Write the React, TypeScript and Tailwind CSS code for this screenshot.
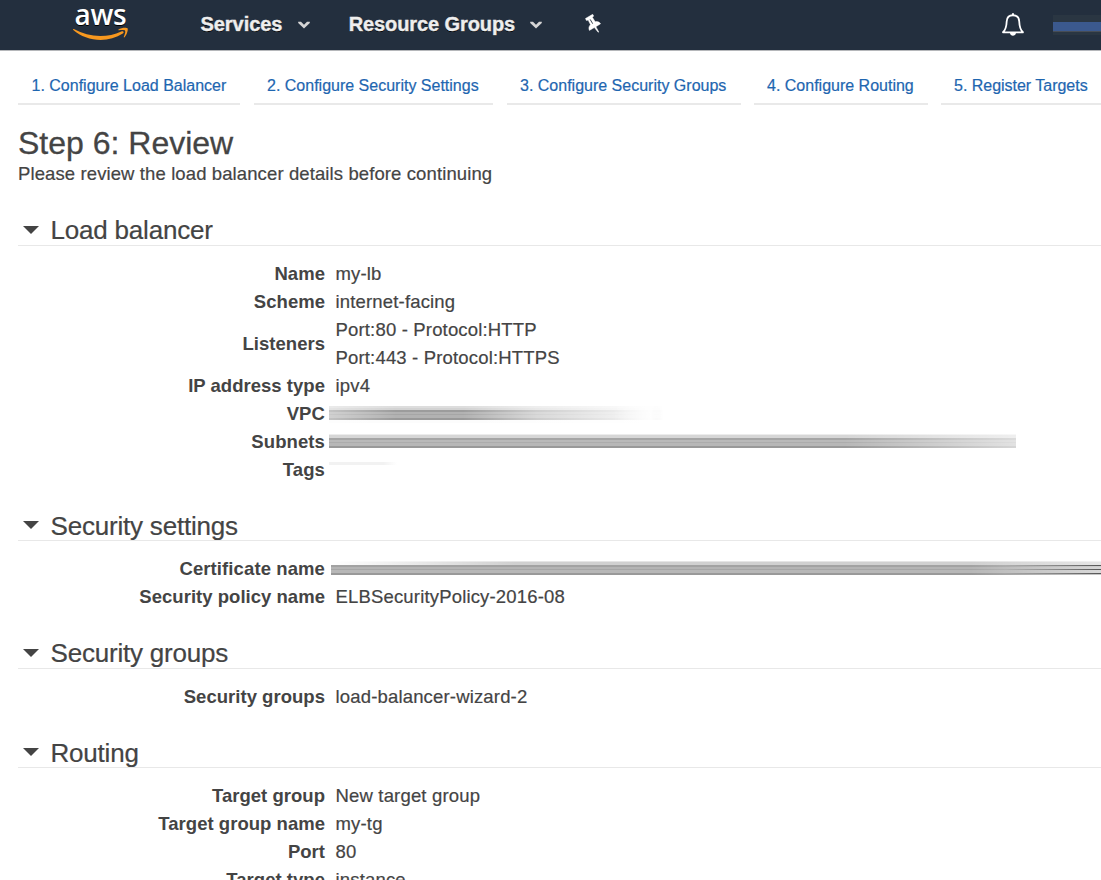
import type { ReactNode } from "react";

const tabs = [
  { label: "1. Configure Load Balancer", width: "w-[222px] mr-[14px]" },
  { label: "2. Configure Security Settings", width: "w-[239px] mr-[14px]" },
  { label: "3. Configure Security Groups", width: "w-[234px] mr-[13px]" },
  { label: "4. Configure Routing", width: "w-[174px] mr-[13px]" },
  { label: "5. Register Targets", width: "w-[170px] -tracking-[0.02px]" },
];

function Chevron() {
  return (
    <svg width="12" height="8" viewBox="0 0 12 8" className="shrink-0">
      <path d="M0.2 .8 H3 L6 3.8 L9 .8 H11.8 V2 L6 7.6 L.2 2 Z" fill="#d5d5d5" />
    </svg>
  );
}

function Logo() {
  return (
    <div className="ml-[73px] flex h-[50px] w-14 shrink-0 flex-col items-center">
      <span className="h-[26px] pr-px font-['Open_Sans',sans-serif] text-[28px] leading-[28px] font-semibold tracking-[-0.2px] text-white">
        aws
      </span>
      <svg width="56" height="14" viewBox="0 0 56 14">
        <path d="M.8 3 C16 11.5 34 12 48.3 5.4 C50.4 4.5 51.5 6.4 49.8 7.6 C35 17.3 13 15.5 .3 4 C-.2 3.3 .1 2.7 .8 3 Z" fill="#f7981f" />
        <path d="M45.5 3.5 C48 1.7 53.6 1.3 54.5 2.3 C55.4 3.6 54 9 51.5 11.2 C51 11.6 50.6 11.3 50.8 10.8 C51.5 9.1 52.8 5.7 52.1 4.7 C51.3 3.7 47.8 4.1 46 4.3 C45.4 4.3 45.1 3.9 45.5 3.5 Z" fill="#f7981f" />
      </svg>
    </div>
  );
}

function Header() {
  return (
    <header className="flex h-[51px] items-center overflow-hidden border-b border-[#b5b7ba] bg-[#232f3e] text-[20px] font-bold text-[#eee] [text-shadow:0_1px_0_#000]">
      <Logo />
      <span className="ml-[71.5px] w-[97.5px] pb-[3px] tracking-[-0.05px] [-webkit-text-stroke:0.4px_#eee]">Services</span>
      <Chevron />
      <span className="ml-[39px] w-[182px] pb-[3px] tracking-[-0.1px] whitespace-nowrap [-webkit-text-stroke:0.4px_#eee]">Resource Groups</span>
      <Chevron />
      <svg width="17" height="19" viewBox="0 0 17 19" className="mb-[3px] ml-[43px]">
        <path d="M.5 4.5 L7.7 .3 L8.7 2 L7.4 3.3 L10.2 7.8 C12.5 7 14.4 8 15.6 9.8 L10.9 12.7 L13.8 18 L13.2 18.3 L9.4 13.6 L4.4 16.4 C3.5 14.2 3.8 12.4 5.5 10.7 L3.2 6.1 L1.4 6.5 Z" fill="white" stroke="white" strokeWidth=".5" />
        <path d="M5.2 5.4 L7.7 9.7" stroke="#232f3e" strokeWidth=".9" />
      </svg>
      <svg width="24" height="24" viewBox="0 0 24 24" className="mb-[3px] ml-[399px]">
        <path d="M2 20.3 C5 17.5 5.5 15 5.7 9.5 C5.9 5.7 8.2 3.2 12 3.2 C15.8 3.2 18.1 5.7 18.3 9.5 C18.5 15 19 17.5 22 20.3 Z" fill="none" stroke="white" strokeWidth="1.8" strokeLinejoin="round" />
        <path d="M11 3 V1.2 H13 V3 Z M9 21 H15 C14.7 24.6 9.3 24.6 9 21 Z" fill="white" />
      </svg>
      <div className="mb-px ml-[28px] h-5 w-12 shrink-0 bg-[linear-gradient(#2a3642_0_7px,#3b598e_7px_16px,#474d55_16px_17px,#2a3642_17px)]" />
    </header>
  );
}

function Section({ title, className, children }: { title: string; className: string; children: ReactNode }) {
  return (
    <section>
      <h2 className={`ml-[18px] flex items-end border-b border-[#e8e8e8] pl-[5px] text-[26px] ${className}`}>
        <svg width="16" height="8" viewBox="0 0 16 8" className="mr-3 mb-[11px]">
          <path d="M0 0 H16 L8 8 Z" fill="#444" />
        </svg>
        <span className="-ml-[0.5px] tracking-[-0.2px] [-webkit-text-stroke:0.2px_#444]">{title}</span>
      </h2>
      <dl className="-mb-px pt-[14px]">{children}</dl>
    </section>
  );
}

function Row({ label, children }: { label: string; children?: ReactNode }) {
  return (
    <div className="flex items-center text-[18.5px] leading-7">
      <dt className="w-[325px] shrink-0 text-right font-bold tracking-[0.03px]">{label}</dt>
      <dd className="pl-[10.5px] tracking-[0.17px] [-webkit-text-stroke:0.2px_#444]">{children}</dd>
    </div>
  );
}

function SmearRow({ label, children }: { label: string; children: ReactNode }) {
  return (
    <div className="flex h-7 text-[18.5px] leading-7">
      <dt className="w-[325px] shrink-0 text-right font-bold tracking-[0.1px]">{label}</dt>
      <dd>{children}</dd>
    </div>
  );
}

export default function App() {
  return (
    <div className="h-[880px] w-[1101px] overflow-hidden bg-white font-['Liberation_Sans',Arial,sans-serif] text-[#444]">
      <Header />
      <nav className="ml-[18px] flex h-[54px] overflow-hidden">
        {tabs.map((t) => (
          <a key={t.label} className={`shrink-0 border-b-2 border-[#e9e9e9] pl-[13px] text-[16px] leading-[69px] whitespace-nowrap text-[#1e66b0] [-webkit-text-stroke:0.2px_#1e66b0] first:pl-[13.5px] ${t.width}`}>
            {t.label}
          </a>
        ))}
      </nav>
      <div className="ml-[18px] pt-5">
        <h1 className="text-[32px] leading-[36px] [-webkit-text-stroke:0.3px_#444]">Step 6: Review</h1>
        <p className="text-[18.5px] leading-[25px] tracking-[0.11px] [-webkit-text-stroke:0.2px_#444]">Please review the load balancer details before continuing</p>
      </div>
      <Section title="Load balancer" className="h-[60px] leading-[30px]">
        <Row label="Name">my-lb</Row>
        <Row label="Scheme">internet-facing</Row>
        <Row label="Listeners">
          <div>Port:80 - Protocol:HTTP</div>
          <div>Port:443 - Protocol:HTTPS</div>
        </Row>
        <Row label="IP address type">ipv4</Row>
        <SmearRow label="VPC">
          <div className="mt-[6px] ml-1 h-[17px] w-[335px] bg-[linear-gradient(90deg,#ffffff66,transparent_20%,transparent_40%,#ffffff80_62%,#ffffffee_96%,#ffffff88_99%,#fff),linear-gradient(#ddd_0_2px,#d3d3d3_2px_4px,#9c9c9c_4px_6px,#b2b2b2_6px_8px,#a6a6a6_8px_9px,#b2b2b2_9px_12px,#999_12px_14px,#fcfcfc_14px)] [mask-image:linear-gradient(90deg,black_85%,transparent)]" />
        </SmearRow>
        <SmearRow label="Subnets">
          <div className="mt-[6px] ml-1 h-[14px] w-[687px] bg-[linear-gradient(90deg,transparent_75%,#ffffff99),linear-gradient(#ececec_0_1px,#d6d6d6_1px_4px,#a5a5a5_4px_6px,#b9b9b9_6px_8px,#acacac_8px_9px,#b7b7b7_9px_12px,#999_12px_14px)]" />
        </SmearRow>
        <SmearRow label="Tags">
          <div className="mt-[6px] ml-1 h-[3px] w-[68px] bg-[linear-gradient(90deg,#f2f2f2_80%,#fff)]" />
        </SmearRow>
      </Section>
      <Section title="Security settings" className="h-[58px] leading-[28px]">
        <SmearRow label="Certificate name">
          <div className="mt-[6px] ml-[6px] h-[14px] w-[770px] bg-[linear-gradient(90deg,transparent_83%,#ffffff77),linear-gradient(90deg,#fff_0%,transparent_24%),linear-gradient(#e5e5e5_0_1px,#d0d0d0_1px_4px,#a2a2a2_4px_6px,#b4b4b4_6px_8px,#a6a6a6_8px_9px,#b7b7b7_9px_12px,#999_12px_14px)] [background-size:100%_100%,100%_4px,100%_100%] bg-no-repeat">
            <div className="ml-auto h-[14px] w-[95px] bg-[linear-gradient(transparent_0_4px,#555_4px_5px,transparent_5px_8px,#555_8px_9px,transparent_9px_12px,#555_12px_13px,transparent_13px)] [mask-image:linear-gradient(90deg,transparent,black)]" />
          </div>
        </SmearRow>
        <Row label="Security policy name">ELBSecurityPolicy-2016-08</Row>
      </Section>
      <Section title="Security groups" className="h-[59px] leading-[30px]">
        <Row label="Security groups">load-balancer-wizard-2</Row>
      </Section>
      <Section title="Routing" className="h-[58px] leading-[28px]">
        <Row label="Target group">New target group</Row>
        <Row label="Target group name">my-tg</Row>
        <Row label="Port">80</Row>
        <Row label="Target type">instance</Row>
      </Section>
    </div>
  );
}
